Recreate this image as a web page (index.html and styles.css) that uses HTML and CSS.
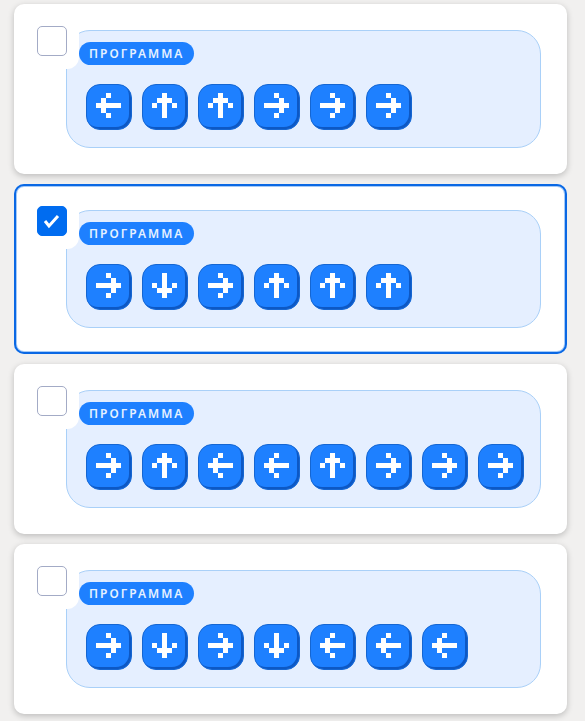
FILE: index.html
```html
<!DOCTYPE html>
<html lang="ru">
<head>
    <meta charset="UTF-8">
    <meta name="viewport" content="width=device-width, initial-scale=1.0">
    <title>Программа</title>
    <link rel="stylesheet" href="styles.css">
</head>
<body>
    <svg class="sprite" aria-hidden="true">
        <symbol id="arrow" viewBox="0 0 5 5">
            <path d="M0 2h3V1h1v1h1v1H4v1H3V3H0zM2 0h1v1H2zM2 4h1v1H2z"/>
        </symbol>
    </svg>
    <main class="options">
        <div class="card">
            <label class="check"><input type="checkbox" aria-labelledby="name1"></label>
            <div class="panel">
                <span class="badge" id="name1">ПРОГРАММА</span>
                <div class="steps">
                    <span class="step left"><svg><use href="#arrow"/></svg></span>
                    <span class="step up"><svg><use href="#arrow"/></svg></span>
                    <span class="step up"><svg><use href="#arrow"/></svg></span>
                    <span class="step right"><svg><use href="#arrow"/></svg></span>
                    <span class="step right"><svg><use href="#arrow"/></svg></span>
                    <span class="step right"><svg><use href="#arrow"/></svg></span>
                </div>
            </div>
        </div>
        <div class="card selected">
            <label class="check"><input type="checkbox" aria-labelledby="name2" checked></label>
            <div class="panel">
                <span class="badge" id="name2">ПРОГРАММА</span>
                <div class="steps">
                    <span class="step right"><svg><use href="#arrow"/></svg></span>
                    <span class="step down"><svg><use href="#arrow"/></svg></span>
                    <span class="step right"><svg><use href="#arrow"/></svg></span>
                    <span class="step up"><svg><use href="#arrow"/></svg></span>
                    <span class="step up"><svg><use href="#arrow"/></svg></span>
                    <span class="step up"><svg><use href="#arrow"/></svg></span>
                </div>
            </div>
        </div>
        <div class="card">
            <label class="check"><input type="checkbox" aria-labelledby="name3"></label>
            <div class="panel">
                <span class="badge" id="name3">ПРОГРАММА</span>
                <div class="steps">
                    <span class="step right"><svg><use href="#arrow"/></svg></span>
                    <span class="step up"><svg><use href="#arrow"/></svg></span>
                    <span class="step left"><svg><use href="#arrow"/></svg></span>
                    <span class="step left"><svg><use href="#arrow"/></svg></span>
                    <span class="step up"><svg><use href="#arrow"/></svg></span>
                    <span class="step right"><svg><use href="#arrow"/></svg></span>
                    <span class="step right"><svg><use href="#arrow"/></svg></span>
                    <span class="step right"><svg><use href="#arrow"/></svg></span>
                </div>
            </div>
        </div>
        <div class="card">
            <label class="check"><input type="checkbox" aria-labelledby="name4"></label>
            <div class="panel">
                <span class="badge" id="name4">ПРОГРАММА</span>
                <div class="steps">
                    <span class="step right"><svg><use href="#arrow"/></svg></span>
                    <span class="step down"><svg><use href="#arrow"/></svg></span>
                    <span class="step right"><svg><use href="#arrow"/></svg></span>
                    <span class="step down"><svg><use href="#arrow"/></svg></span>
                    <span class="step left"><svg><use href="#arrow"/></svg></span>
                    <span class="step left"><svg><use href="#arrow"/></svg></span>
                    <span class="step left"><svg><use href="#arrow"/></svg></span>
                </div>
            </div>
        </div>
    </main>
</body>
</html>
```
FILE: styles.css
```css
* {
    box-sizing: border-box;
}

body {
    margin: 0;
    background-color: #f1f0ef;
    font-family: "Noto Sans", "Open Sans", sans-serif;
}

.sprite {
    display: none;
}

.options {
    display: flex;
    flex-direction: column;
    gap: 10px;
    padding: 4px 18px 7px 14px;
}

.card {
    position: relative;
    padding: 26px 26px 26px 52px;
    border-radius: 10px;
    background-color: #fff;
    box-shadow: 0 2px 6px rgba(0, 0, 0, 0.22);
}

.card.selected {
    box-shadow: inset 0 0 0 2px #0a68e4, inset 0 0 0 3px #a4caf8;
}

/* white corner that covers the edge of the panel */
.check {
    position: absolute;
    top: 10px;
    left: 11px;
    display: flex;
    padding: 12px;
    padding-bottom: 13px;
    border-radius: 12px;
    border-top-right-radius: 0;
    border-bottom-left-radius: 0;
    background-color: #fff;
}

.check input {
    appearance: none;
    width: 30px;
    height: 30px;
    margin: 0;
    border: 1px solid #a3abc6;
    border-radius: 5px;
    background-color: #fff;
    cursor: pointer;
}

.check input:checked {
    border-color: #006cf0;
    background: #006cf0 url("data:image/svg+xml,%3Csvg xmlns='http://www.w3.org/2000/svg' viewBox='0 0 28 28'%3E%3Cpath d='M7 14l4 5 9-10' fill='none' stroke='%23fff' stroke-width='3'/%3E%3C/svg%3E") center / 28px no-repeat;
}

.panel {
    padding: 11px 12px 17px;
    border: 1px solid #a9d0f8;
    border-radius: 24px;
    background-color: #e5efff;
}

.badge {
    display: block;
    width: fit-content;
    padding: 0 10px;
    border-radius: 12px;
    background-color: #1e80ff;
    color: #e5f1ff;
    font-size: 12px;
    font-weight: 600;
    line-height: 23px;
    letter-spacing: 2px;
}

.steps {
    display: flex;
    flex-wrap: wrap;
    gap: 10px;
    margin-top: 19px;
    padding-left: 7px;
}

.step {
    width: 46px;
    height: 46px;
    padding: 8px 9px;
    border: 1px solid #1566d2;
    border-radius: 14px;
    background-color: #1e80ff;
    box-shadow: inset -2px -2px 0 #0d58c4;
}

.step svg {
    display: block;
    width: 25px;
    height: 25px;
    fill: #fff;
    shape-rendering: crispEdges;
}

.up svg {
    transform: rotate(-90deg);
}

.down svg {
    transform: rotate(90deg);
}

.left svg {
    transform: rotate(180deg);
}
```
